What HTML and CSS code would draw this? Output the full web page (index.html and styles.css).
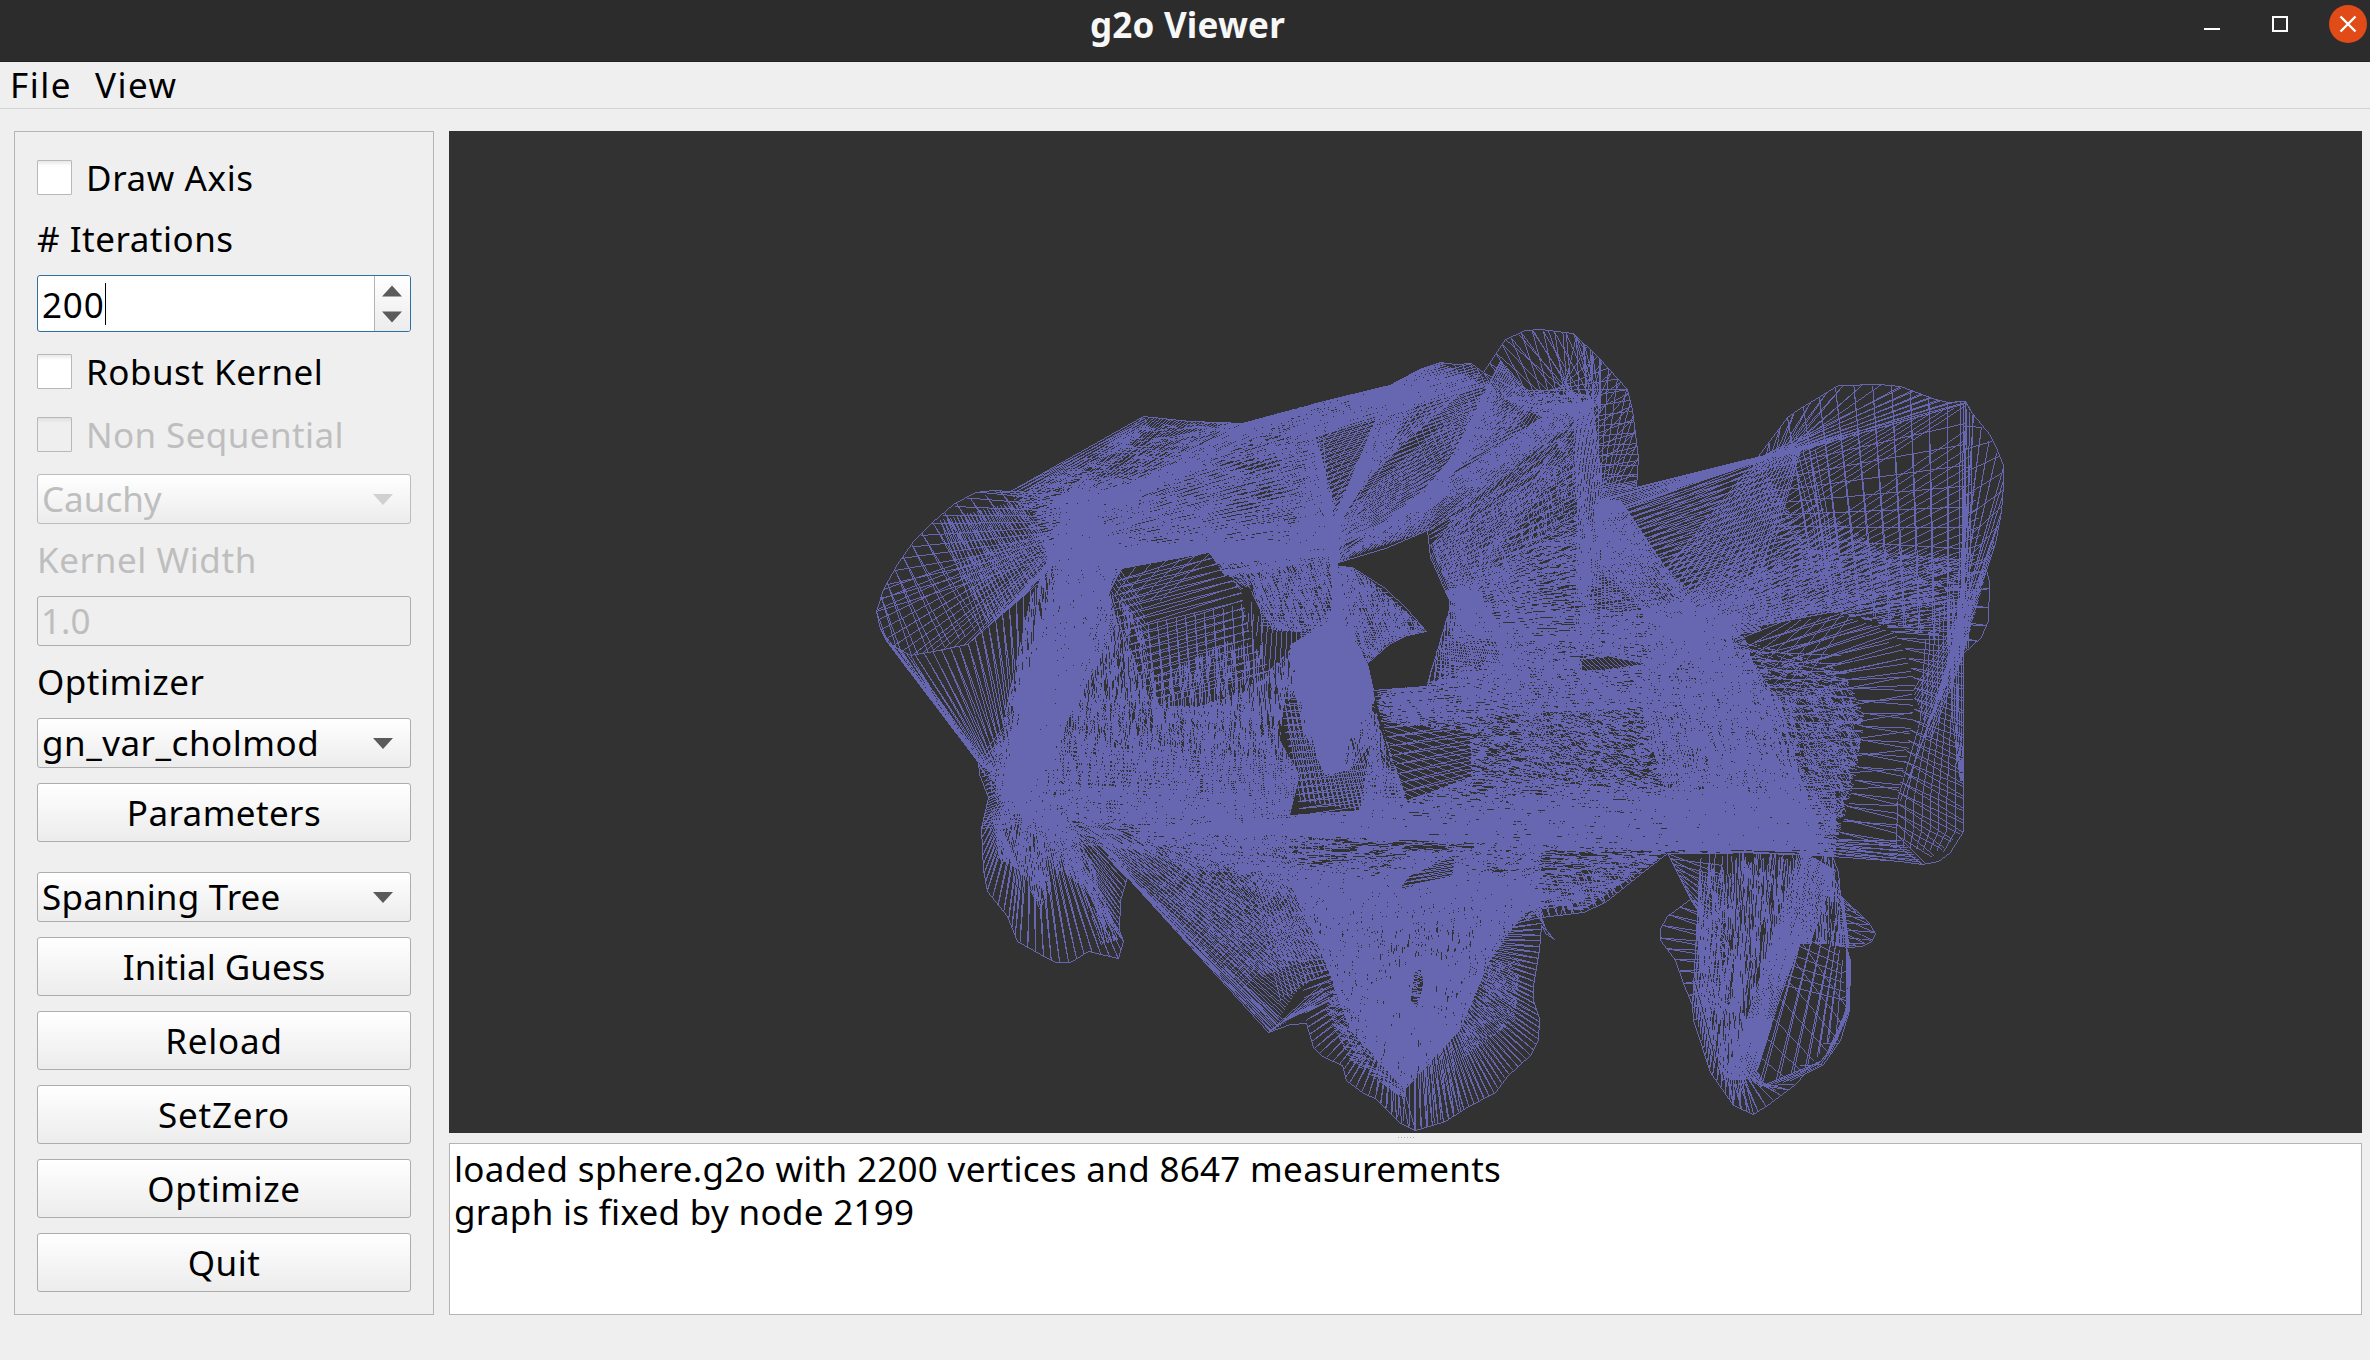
FILE: index.html
```html
<!DOCTYPE html>
<html lang="en">
<head>
<meta charset="utf-8">
<title>g2o Viewer</title>
<link rel="stylesheet" href="styles.css">
</head>
<body>
<header class="titlebar">
  <h1 class="title">g2o Viewer</h1>
  <div class="window-buttons">
    <svg class="wb" width="38" height="38" viewBox="0 0 38 38"><path d="M11 24h16" stroke="#fff" stroke-width="2"/></svg>
    <svg class="wb" width="38" height="38" viewBox="0 0 38 38"><rect x="12" y="12" width="14" height="14" fill="none" stroke="#fff" stroke-width="2"/></svg>
    <svg class="wb" width="38" height="38" viewBox="0 0 38 38"><circle cx="19" cy="19" r="19" fill="#e04b17"/><path d="M11.500 11.500l15 15M26.500 11.500l-15 15" stroke="#fff" stroke-width="2.400"/></svg>
  </div>
</header>
<nav class="menubar"><span class="menu">File</span><span class="menu">View</span></nav>
<main class="workspace">
  <aside class="panel">
    <label class="check"><i class="box"></i><span class="ls-6">Draw Axis</span></label>
    <div class="label ls-5"># Iterations</div>
    <div class="spin"><span class="spin-value"><span class="ls-8">200</span><i class="caret"></i></span>
      <span class="steppers"><svg width="20" height="38" viewBox="0 0 20 38"><path d="M0 11.500L10 0.500L20 11.500ZM0 26.500L10 37.500L20 26.500Z" fill="#5b5b5b"/></svg></span></div>
    <label class="check robust"><i class="box"></i><span class="ls-5">Robust Kernel</span></label>
    <label class="check off"><i class="box"></i><span class="ls-4">Non Sequential</span></label>
    <div class="combo off"><span>Cauchy</span><svg width="20" height="11" viewBox="0 0 20 11"><path d="M0 0H20L10 11Z" fill="#d0d0d0"/></svg></div>
    <div class="label short off ls-6">Kernel Width</div>
    <div class="edit off">1.0</div>
    <div class="label short ls-5">Optimizer</div>
    <div class="combo"><span class="ls-5">gn_var_cholmod</span><svg width="20" height="11" viewBox="0 0 20 11"><path d="M0 0H20L10 11Z" fill="#5b5b5b"/></svg></div>
    <button class="button ls-4">Parameters</button>
    <div class="combo spaced"><span class="ls-3">Spanning Tree</span><svg width="20" height="11" viewBox="0 0 20 11"><path d="M0 0H20L10 11Z" fill="#5b5b5b"/></svg></div>
    <button class="button">Initial Guess</button>
    <button class="button ls-8">Reload</button>
    <button class="button ls-8">SetZero</button>
    <button class="button ls-6">Optimize</button>
    <button class="button ls-5">Quit</button>
  </aside>
  <section class="content">
    <canvas class="view" id="view" width="1913" height="1002"></canvas>
    <div class="splitter"><i></i><i></i><i></i><i></i><i></i><i></i></div>
    <div class="log"><div>loaded sphere.g2o with 2200 vertices and 8647 measurements</div><div>graph is fixed by node 2199</div></div>
  </section>
</main>
<script src="graph.js"></script>
</body>
</html>
```
FILE: styles.css
```css
* { box-sizing: border-box; }
body { margin: 0; width: 2370px; height: 1360px; overflow: hidden; background: #efefef; color: #000; font: 35px "Noto Sans", sans-serif; }
.titlebar { height: 62px; background: #2c2c2c; border-bottom: 1px solid #231f22; display: grid; grid-template-columns: 1fr auto 1fr; }
.title { grid-column: 2; margin: 0; padding-left: 5px; font-size: 35px; line-height: 50px; font-weight: 700; letter-spacing: 0.2px; color: #f7f7f7; }
.window-buttons { justify-self: end; display: flex; gap: 30px; padding: 5px 3px 0 0; }
.wb { display: block; }
.menubar { height: 47px; border-bottom: 1px solid #d3d3d3; display: flex; gap: 23px; padding-left: 10px; line-height: 46px; }
.menu { letter-spacing: 1.5px; }
.workspace { display: flex; gap: 15px; padding: 22px 8px 0 14px; }
.panel { flex: none; width: 420px; height: 1184px; border: 1px solid #b4b4b4; padding: 28px 22px 0; display: flex; flex-direction: column; gap: 15px; white-space: nowrap; }
.ls-3 { letter-spacing: 0.2px; }
.ls-4 { letter-spacing: 0.4px; }
.ls-5 { letter-spacing: 0.5px; }
.ls-6 { letter-spacing: 0.6px; }
.ls-8 { letter-spacing: 0.8px; }
.check { height: 35px; margin-bottom: 7px; display: flex; align-items: center; gap: 14px; line-height: 35px; }
.robust { margin: 7px 0 13px; }
.box { width: 35px; height: 35px; border: 1px solid #b8b8b8; border-radius: 1px; background: linear-gradient(#e8e8e8, #fff 5px); }
.off { color: #bebebe; }
.off .box { background: linear-gradient(#dfdfdf, #efefef 5px); }
.label { height: 43px; line-height: 43px; }
.short { height: 42px; line-height: 42px; }
.spin { height: 57px; border: 1px solid #2d71a0; border-radius: 3px; background: #fff; display: flex; overflow: hidden; }
.spin-value { flex: 1; display: flex; align-items: center; padding: 1px 0 0 4px; }
.caret { width: 1px; height: 42px; margin-left: 1px; background: #000; }
.steppers { width: 36px; border-left: 1px solid #b4b4b4; background: linear-gradient(#fff, #ececec); display: flex; align-items: center; justify-content: center; padding-right: 1px; }
.steppers svg { display: block; }
.combo { height: 50px; border: 1px solid #adadad; border-radius: 3px; background: linear-gradient(#fff, #ececec); display: flex; align-items: center; justify-content: space-between; padding: 0 17px 0 4px; line-height: 48px; }
.combo.off { border-color: #bcbcbc; }
.spaced { margin-top: 15px; }
.edit { height: 50px; border: 1px solid #adadad; border-radius: 3px; padding-left: 3px; line-height: 48px; }
.button { height: 59px; flex: none; border: 1px solid #adadad; border-radius: 3px; background: linear-gradient(#fff, #ececec); font-family: inherit; font-size: inherit; color: inherit; padding: 0; line-height: 57px; }
.content { flex: none; width: 1913px; display: flex; flex-direction: column; }
.view { display: block; width: 1913px; height: 1002px; background: #323232; }
.splitter { height: 10px; display: flex; gap: 2px; justify-content: center; padding-top: 4px; }
.splitter i { width: 1px; height: 1px; background: #aaa; }
.log { height: 172px; border: 1px solid #b4b4b4; background: #fff; padding: 3px 4px; line-height: 43px; letter-spacing: 0.3px; }
```
FILE: graph.js
```js
(function () {
  var W = 1913, H = 1002, OX = 449, OY = 131;
  var canvas = document.getElementById('view');
  var ctx = canvas.getContext('2d');
  var buf = new Uint8Array(W * H);
  var seed = 12345;
  function rnd() { seed = (seed * 1664525 + 1013904223) >>> 0; return seed / 4294967296; }
  function P(s) {
    return s.trim().split(/\s+/).map(function (p) { return p.split(',').map(Number); });
  }
  function mask(s) {
    var c = document.createElement('canvas'); c.width = W; c.height = H;
    var g = c.getContext('2d');
    s.split('/').forEach(function (part, i) {
      g.globalCompositeOperation = i ? 'destination-out' : 'source-over';
      g.beginPath();
      P(part).forEach(function (p) { g.lineTo(p[0] - OX, p[1] - OY); });
      g.fill();
    });
    var d = g.getImageData(0, 0, W, H).data, m = new Uint8Array(W * H);
    for (var i = 0; i < m.length; i++) m[i] = d[i * 4 + 3] > 100 ? 1 : 0;
    return m;
  }
  function line(x0, y0, x1, y1, m) {
    x0 -= OX; x1 -= OX; y0 -= OY; y1 -= OY;
    var n = Math.max(1, Math.round(Math.max(Math.abs(x1 - x0), Math.abs(y1 - y0))));
    for (var i = 0; i <= n; i++) {
      var x = Math.round(x0 + (x1 - x0) * i / n), y = Math.round(y0 + (y1 - y0) * i / n);
      if (x < 0 || y < 0 || x >= W || y >= H) continue;
      if (!m || m[y * W + x]) buf[y * W + x] = 1;
    }
  }
  function at(pts, t) {
    t = Math.max(0, Math.min(1, t));
    var len = [0], i;
    for (i = 1; i < pts.length; i++) len.push(len[i - 1] + Math.hypot(pts[i][0] - pts[i - 1][0], pts[i][1] - pts[i - 1][1]));
    var d = t * len[len.length - 1];
    for (i = 1; i < pts.length - 1 && len[i] < d; i++);
    var k = (d - len[i - 1]) / ((len[i] - len[i - 1]) || 1);
    return [pts[i - 1][0] + (pts[i][0] - pts[i - 1][0]) * k, pts[i - 1][1] + (pts[i][1] - pts[i - 1][1]) * k];
  }
  /* ribs between two rails; shift adds a second, skewed family */
  function fan(a, b, n, shift, m) {
    a = P(a); b = P(b);
    for (var i = 0; i <= n; i++) {
      var p = at(a, i / n), q = at(b, i / n);
      line(p[0], p[1], q[0], q[1], m);
      if (shift) { q = at(b, i / n + shift); line(p[0], p[1], q[0], q[1], m); }
    }
  }
  function rails(a, b, n, m) {
    a = P(a); b = P(b);
    for (var j = 0; j <= n; j++) {
      var prev = null;
      for (var i = 0; i <= 24; i++) {
        var p = at(a, i / 24), q = at(b, i / 24), k = j / n;
        var c = [p[0] + (q[0] - p[0]) * k, p[1] + (q[1] - p[1]) * k];
        if (prev) line(prev[0], prev[1], c[0], c[1], m);
        prev = c;
      }
    }
  }
  function poly(s, m) { var p = P(s); for (var i = 1; i < p.length; i++) line(p[i - 1][0], p[i - 1][1], p[i][0], p[i][1], m); }
  /* overlapping short strokes inside an area */
  function weave(s, cover, len, deg) {
    var m = mask(s), xs = P(s.split('/')[0]), x0 = 1e9, x1 = 0, y0 = 1e9, y1 = 0;
    xs.forEach(function (p) { x0 = Math.min(x0, p[0]); x1 = Math.max(x1, p[0]); y0 = Math.min(y0, p[1]); y1 = Math.max(y1, p[1]); });
    for (var i = 0; i < m.length; i++) if (m[i]) m[i] = all[i];
    var n = (x1 - x0) * (y1 - y0) * -Math.log(1 - cover) / len;
    for (i = 0; i < n; i++) {
      var x = x0 + rnd() * (x1 - x0), y = y0 + rnd() * (y1 - y0), a = (deg + (rnd() - 0.5) * 14) * Math.PI / 180;
      line(x, y, x + Math.cos(a) * len, y + Math.sin(a) * len, m);
    }
  }
  function clear(s) { var m = mask(s); for (var i = 0; i < m.length; i++) if (m[i]) buf[i] = 0; }

  var outline = '1143,416 1190,421 1243,423 1320,402 1390,385 1420,369 1440,362 1456,364 1471,363 1483,372 1505,339 1525,330 1540,329 1573,333 1598,357 1627,389 1632,410 1638,457 1636,487 1757,457 1787,417 1800,408 1838,385 1880,384 1900,386 1935,399 1948,402 1965,401 1972,413 1990,435 1997,450 2003,465 2003,485 2001,511 1995,543 1986,570 1989,582 1988,620 1981,637 1963,653 1963,831 1950,852 1938,861 1922,864 1900,861 1832,856 1838,872 1840,895 1868,922 1875,933 1871,941 1862,946 1846,947 1850,960 1849,1010 1840,1040 1823,1064 1805,1073 1795,1084 1770,1103 1753,1114 1733,1105 1710,1072 1693,1020 1692,1005 1683,983 1675,960 1660,940 1660,928 1667,916 1690,899 1678,875 1667,853 1640,874 1605,902 1583,912 1541,917 1546,930 1554,939 1545,933 1541,925 1539,950 1533,985 1533,1000 1539,1018 1538,1040 1530,1055 1507,1076 1495,1092 1465,1108 1445,1121 1415,1130 1400,1123 1375,1098 1363,1093 1346,1080 1342,1065 1322,1056 1313,1047 1306,1023 1290,1024 1268,1032 1127,877 1120,900 1119,930 1123,941 1118,958 1088,951 1070,962 1055,962 1040,954 1017,941 1007,916 987,891 983,870 981,828 988,797 979,774 978,762 887,642 880,629 876,611 883,589 897,564 913,541 932,522 953,504 975,492 993,490 1010,491 1143,416';
  var hole = '1338,562 1385,548 1427,530 1430,557 1449,600 1449,610 1428,680 1427,686 1373,690 1367,663 1390,643 1407,635 1426,631 1407,609 1385,588 1352,567 1338,566';
  var all = mask(outline + '/' + hole);

  /* interior sheets */
  weave('1065,520 1112,575 1125,640 1150,700 1250,690 1300,640 1340,640 1370,690 1400,800 1400,830 1060,820 990,790 1010,690 1030,600', 0.62, 18, 88);
  weave('1010,700 1250,695 1290,760 1400,800 1400,840 1200,840 1000,810 985,770', 0.38, 6, 40);
  weave('1000,780 1300,800 1800,790 1835,856 1667,853 1583,910 1330,900 1120,830', 0.62, 14, 3);
  weave('1275,870 1541,840 1541,915 1500,930 1330,930', 0.68, 9, -20);
  weave('1060,480 1095,500 1120,560 1080,660 1050,800 1000,800 1020,680 1060,560', 0.72, 18, 100);
  weave('1310,430 1323,460 1340,560 1370,580 1425,629 1367,664 1350,635 1270,630 1240,570 1300,540', 0.74, 9, 70);
  weave('1290,645 1340,615 1368,664 1375,700 1350,740 1338,775 1322,770 1300,700', 0.997, 10, 90);
  weave('1375,695 1428,684 1460,670 1600,620 1680,600 1740,620 1760,690 1800,850 1480,850 1400,800', 0.62, 6, 12);
  weave('1455,600 1600,500 1630,520 1700,620 1640,650 1430,690', 0.3, 8, 5);
  weave('1660,600 1720,620 1780,700 1820,850 1680,850 1640,700', 0.72, 14, 80);
  weave('1700,640 1780,700 1850,680 1862,740 1840,820 1830,850 1700,850', 0.38, 6, 60);
  weave('1290,880 1541,870 1530,905 1490,960 1460,1030 1405,1090 1350,1030 1320,950', 0.88, 10, 95);
  weave('1350,950 1480,950 1450,1040 1410,1080 1370,1030', 0.75, 10, 90);
  weave('1700,850 1832,856 1840,900 1845,945 1795,950 1770,1010 1745,1080 1722,1080 1705,1010 1695,960', 0.62, 26, 92);
  weave('1580,490 1600,490 1590,640 1572,640', 0.5, 16, 90);
  weave('1500,398 1590,390 1592,410 1540,416', 0.6, 10, 10);
  weave('1000,800 1060,800 1100,830 1250,835 1250,880 1130,850 1040,840', 0.5, 8, 20);
  weave('1010,500 1143,425 1310,420 1325,540 1120,560 1060,570', 0.3, 9, -8);
  weave('1120,550 1320,515 1330,550 1212,556 1122,568', 0.6, 10, -8);
  weave('1030,495 1100,460 1140,500 1120,560 1050,560', 0.35, 8, -15);
  weave('1212,554 1300,540 1300,560 1240,590', 0.7, 9, 40);
  weave('1480,380 1590,400 1580,480 1460,540 1440,500', 0.25, 9, -35);
  weave('1430,545 1580,450 1590,500 1460,610', 0.25, 8, 80);

  /* upper left band */
  fan('1060,500 1095,520', '1143,416 1243,423 1320,402', 26, 0.06, all);
  fan('1010,491 1020,510', '1143,416 1150,428', 7, 0.3, all);
  fan('1030,505 1060,600', '1310,410 1320,560', 36, 0.1, all);
  fan('1080,500 1110,575', '1290,430 1330,545', 26, 0, all);
  fan('1060,520 1100,560', '1243,423 1330,545', 30, 0.07, all);
  fan('1150,440 1330,560', '1243,423 1440,362', 30, 0, all);
  fan('1315,560 1325,540', '1440,362 1390,385', 12, 0.2, all);
  fan('1060,550 1110,570', '1270,540 1330,555', 20, 0.1, all);
  fan('1243,423 1320,402', '1310,540 1330,540', 14, 0, all);
  /* left column and horizontal bundle */
  fan('1000,800 1030,790', '1060,540 1150,560', 40, 0.05, all);
  fan('1020,760 1330,860', '1090,560 1330,640', 50, 0, all);
  fan('1000,740 1000,820', '1835,800 1835,856', 20, 0.1, all);
  fan('1120,830 1300,835', '1835,780 1835,855', 24, 0, all);
  fan('1310,420 1330,560', '1360,600 1340,700', 24, 0, all);
  fan('1400,800 1330,545', '1300,640 1390,800', 30, 0, all);
  fan('1338,568 1352,569 1385,590 1426,631', '1270,575 1260,625', 16, 0, all);
  fan('1426,631 1390,643 1367,663', '1300,620 1300,650', 12, 0, all);

  /* top middle band and crest */
  fan('1250,423 1330,560', '1471,363 1540,440', 34, 0.06, all);
  fan('1243,423 1300,440', '1440,362 1483,385', 16, 0.05, all);
  fan('1320,560 1330,500', '1390,385 1483,372', 12, 0.2, all);
  fan('1300,412 1320,440', '1440,362 1420,369', 10, 0.3, all);
  fan('1325,530 1330,550', '1470,400 1500,470', 26, 0, all);
  fan('1338,560 1427,530', '1540,405 1500,360', 24, 0.15, all);
  fan('1325,560 1430,530', '1560,405 1600,400', 24, 0, all);
  fan('1400,400 1456,364 1471,363 1483,372', '1430,470 1500,400', 12, 0, all);
  fan('1483,372 1505,339 1525,330 1573,333 1600,360', '1510,400 1600,410', 13, 0.35, all);
  fan('1505,339 1540,329 1573,333 1627,389', '1600,420 1520,390', 10, 0, all);
  fan('1573,333 1627,389 1638,457 1636,487', '1585,350 1590,490', 13, 0.18, all);
  fan('1590,345 1627,389 1632,410 1638,457', '1596,500 1608,510', 9, 0, all);
  fan('1627,389 1638,457 1636,487', '1540,405 1590,480', 9, 0, all);
  fan('1573,400 1592,400', '1580,600 1610,560', 16, 0, all);
  fan('1430,557 1456,610', '1520,400 1600,410', 24, 0, all);
  fan('1427,530 1470,640', '1570,430 1600,640', 26, 0.1, all);
  fan('1430,545 1450,590', '1560,410 1590,600', 22, 0, all);
  fan('1450,600 1470,620', '1590,400 1620,560', 20, 0, all);
  fan('1428,684 1560,690', '1440,590 1470,590', 24, 0.2, all);
  fan('1455,590 1455,640', '1600,500 1680,640', 26, 0.1, all);
  fan('1600,500 1620,500', '1580,680 1720,650', 22, 0.1, all);
  fan('1595,500 1590,560', '1720,620 1740,700', 22, 0.1, all);
  fan('1460,600 1440,690', '1700,620 1720,720', 34, 0, all);
  fan('1375,690 1400,720', '1700,640 1740,700', 16, 0.2, all);
  fan('1460,600 1480,590', '1680,720 1560,850', 26, 0, all);

  /* right wing */
  fan('1600,487 1600,515', '1757,457 1790,450', 14, 0.15, all);
  fan('1600,500 1670,600', '1757,457 1965,405', 17, 0, all);
  fan('1620,510 1690,620', '1757,460 1830,580', 26, 0.05, all);
  fan('1640,600 1750,625', '1757,457 1800,450', 16, 0.1, all);
  fan('1690,620 1760,625', '1965,430 1985,570', 16, 0, all);
  fan('1700,625 1840,610', '1800,530 1980,560', 30, 0, all);
  fan('1680,600 1700,640', '1810,500 1950,600', 24, 0.05, all);
  fan('1757,457 1787,417 1838,385 1880,384 1900,386', '1760,465 1800,440', 9, 0.15, all);
  fan('1757,458 1800,450', '1900,388 1965,403', 6, 0.2, all);
  fan('1787,417 1838,385 1900,386 1965,401', '1815,590 1860,610 1915,630 1962,650', 10, 0.012, all);
  fan('1757,458 1780,560', '1965,402 1965,590', 9, 0, all);
  fan('1965,402 1960,590', '1972,413 1997,450 2003,485 1998,540', 8, 0, all);
  fan('1965,402 1972,413 2003,465 2001,511 1986,570', '1962,650 1930,720 1900,800', 12, 0.02, all);
  fan('1960,402 1972,415', '1958,640 1968,650', 4, 0, all);
  fan('1840,613 1895,633 1914,680 1914,710 1896,800 1896,845', '1986,570 1963,653 1962,831 1922,864', 26, 0.03, all);
  rails('1925,640 1920,720 1897,800 1896,845', '1963,560 1963,653 1963,831 1950,852', 8, all);
  rails('1948,600 1950,640 1952,720 1960,780', '1963,600 1963,653 1963,700 1963,780', 5, all);
  fan('1913,690 1930,740', '1986,570 1963,653', 14, 0, all);
  fan('1986,570 1989,582 1988,620 1981,637 1963,653', '1950,575 1950,650', 5, 0.05, all);
  rails('1790,450 1812,520 1822,590', '1815,450 1828,520 1835,590', 4, all);
  weave('1690,615 1800,545 1960,560 1960,640 1900,630 1840,612 1760,625', 0.25, 8, -8);

  clear('1760,627 1838,614 1885,625 1908,652 1913,680 1912,712 1904,760 1895,800 1894,840 1835,846 1845,800 1858,765 1864,715 1850,683 1810,655 1770,645');
  fan('1755,642 1850,683 1864,715 1855,780 1836,845', '1838,614 1895,633 1914,680 1908,750 1896,800 1896,856', 20, 0.02, all);
  fan('1735,660 1850,800 1832,856', '1880,625 1914,700 1896,800 1896,862', 13, 0, all);
  fan('1735,640 1790,700', '1780,622 1850,614', 7, 0, all);
  fan('1832,840 1832,856', '1900,840 1922,864', 5, 0.3, all);
  fan('1720,650 1800,850', '1840,655 1862,730 1836,840', 22, 0.1, all);
  weave('1740,640 1830,665 1850,683 1864,715 1855,780 1836,845 1780,845', 0.25, 5, 20);

  /* left lobe */
  fan('1010,491 975,492 932,522 897,564 876,611', '1100,495 1070,550', 13, 0, all);
  fan('1000,491 953,504 913,541 883,589 876,611', '1060,564 993,621 933,651 905,655 887,642', 12, 0.03, all);
  fan('883,589 876,611 880,629 887,642 910,655 967,644 1020,598', '1080,520 1095,520', 20, 0.02, all);
  fan('940,520 1020,500', '980,630 1060,560', 24, 0.1, all);
  fan('880,629 887,642 910,655 967,644 1020,598 1045,580', '978,762 1000,780 1030,760', 22, 0.1, all);
  poly('887,642 910,655 933,651 967,644 993,621 1020,598 1060,564', all);
  fan('887,642 910,655', '978,762 985,775', 5, 0.3, all);
  fan('978,760 988,797', '1030,690 1040,780', 9, 0.3, all);

  /* lower left lobe */
  fan('981,828 983,870 987,891 1007,916 1017,941 1055,962 1070,962 1088,951 1118,958 1123,941', '1005,790 1050,800', 28, 0.08, all);
  fan('1123,941 1119,930 1120,900 1127,877', '1020,800 1070,820', 12, 0.2, all);
  fan('988,797 981,828', '1040,770 1040,820', 12, 0, all);
  weave('990,800 1060,800 1095,870 1100,900 1060,870 1040,910 1020,870 1000,860', 0.6, 22, 78);
  weave('1060,830 1095,870 1118,940 1100,945', 0.4, 22, 70);

  /* diagonal sheet to the bottom */
  fan('1060,800 1127,877', '1330,940 1268,1032', 18, 0.08, all);
  fan('1100,850 1127,877', '1285,1022 1268,1032', 7, 0.3, all);
  fan('1110,840 1250,830', '1250,980 1330,950', 26, 0.15, all);
  fan('1150,900 1240,990', '1230,800 1330,900', 24, 0, all);
  fan('1240,830 1280,830', '1280,1000 1340,960', 16, 0.2, all);
  weave('1120,830 1300,840 1330,920 1290,900 1200,880', 0.35, 8, 30);
  fan('1268,1032 1290,1015', '1320,985 1330,1000', 6, 0.3, all);

  /* bottom lump */
  fan('1320,920 1300,960 1306,1023 1313,1047 1342,1065 1346,1080 1375,1098 1400,1123 1415,1130', '1400,940 1370,960 1395,1060', 36, 0.03, all);
  fan('1415,1130 1445,1121 1495,1092 1530,1055 1538,1040 1539,1018 1533,985 1539,950 1541,917', '1412,1020 1450,1020 1480,930', 48, 0.03, all);
  fan('1375,1098 1415,1130 1460,1110', '1390,980 1440,980', 14, 0, all);
  weave('1330,940 1360,930 1410,1050 1405,1100 1350,1060 1325,1010', 0.45, 8, 20);
  weave('1460,1030 1480,960 1520,960 1515,1020 1460,1060', 0.35, 5, 40);
  fan('1541,917 1546,930 1554,939', '1500,880 1540,905 1541,925', 8, 0, all);
  fan('1541,917 1583,912 1605,902 1667,853', '1530,880 1640,855', 18, 0.06, all);
  fan('1560,915 1605,902 1667,853', '1570,880 1650,850', 11, -0.08, all);
  clear('1415,970 1424,968 1422,990 1417,1007 1411,1000');
  weave('1411,968 1424,968 1422,990 1417,1007 1411,1000', 0.55, 5, -10);

  /* lower right lobe */
  fan('1667,853 1690,899', '1720,853 1730,960', 9, 0.2, all);
  fan('1690,899 1667,916 1660,928 1660,940 1675,960 1692,1005 1693,1020', '1720,910 1730,1000', 11, 0.08, all);
  fan('1692,1005 1710,1072 1733,1105 1753,1114', '1700,860 1740,1060', 18, 0.12, all);
  fan('1733,1105 1753,1114 1795,1084', '1720,1050 1760,1085', 8, 0.12, all);
  fan('1730,1070 1760,1085', '1800,850 1835,870', 24, 0.1, all);
  fan('1835,870 1850,960 1849,1010 1840,1040 1823,1064', '1820,870 1843,960 1838,1010 1800,1065', 8, 0, all);
  rails('1838,880 1846,947 1846,1010 1823,1060 1760,1086', '1843,900 1850,960 1849,1010 1825,1064 1790,1080', 4, all);
  clear('1800,944 1830,944 1842,985 1838,1020 1822,1045 1790,1066 1762,1080 1758,1070 1780,1000');
  fan('1803,930 1815,930 1832,930 1842,960', '1760,1080 1782,1078 1812,1062 1836,1030', 6, 0.03, all);
  fan('1800,940 1780,1000 1765,1040 1757,1078', '1848,1010 1840,1040 1813,1060 1775,1090', 7, 0, all);
  fan('1800,935 1785,985', '1838,955 1846,1000', 5, 0, all);
  fan('1843,900 1868,922 1875,933 1871,941 1846,947', '1835,880 1840,945', 9, 0.2, all);

  /* openings where single ribs stay visible */
  clear('1122,569 1209,553 1222,572 1236,592 1242,625 1262,640 1250,690 1200,706 1160,706 1140,665 1118,625 1110,592');
  fan('1118,580 1112,610 1130,660 1155,706', '1205,552 1240,590 1250,640 1270,670', 18, 0.06, all);
  fan('1138,625 1260,600', '1145,700 1265,740', 13, 0.015, all);
  fan('1135,567 1209,553', '1110,600 1160,600', 5, 0, all);
  fan('1120,570 1110,590', '1140,600 1150,640', 5, 0, all);
  weave('1110,590 1140,620 1160,706 1140,700', 0.4, 12, 80);
  weave('1150,680 1230,640 1262,640 1260,720 1160,720', 0.3, 12, 88);
  clear('1381,722 1440,728 1470,733 1471,777 1407,800');
  fan('1376,700 1407,800', '1472,690 1472,780', 11, 0.05, all);
  fan('1381,712 1400,790', '1475,740 1475,830', 13, 0, all);
  clear('1582,660 1610,657 1645,664 1600,670 1582,670');
  fan('1575,658 1640,658', '1590,672 1655,672', 14, 0, all);
  clear('1408,877 1455,855 1452,876 1402,888');
  fan('1400,860 1400,890', '1460,850 1460,878', 8, 0.1, all);
  clear('1295,695 1303,730 1325,775 1350,770 1370,745 1360,810 1290,815 1300,775 1280,740 1284,705');
  fan('1278,690 1300,815', '1305,690 1395,800', 18, 0.05, all);
  fan('1284,700 1370,740', '1300,800 1390,815', 18, 0.05, all);
  weave('1325,640 1350,640 1345,770 1330,775', 0.97, 12, 90);

  poly(outline, null);
  poly(hole, null);

  var img = ctx.createImageData(W, H);
  for (var i = 0; i < buf.length; i++) {
    var v = buf[i];
    img.data[i * 4] = v ? 103 : 50;
    img.data[i * 4 + 1] = v ? 102 : 50;
    img.data[i * 4 + 2] = v ? 177 : 50;
    img.data[i * 4 + 3] = 255;
  }
  ctx.putImageData(img, 0, 0);
})();
```
